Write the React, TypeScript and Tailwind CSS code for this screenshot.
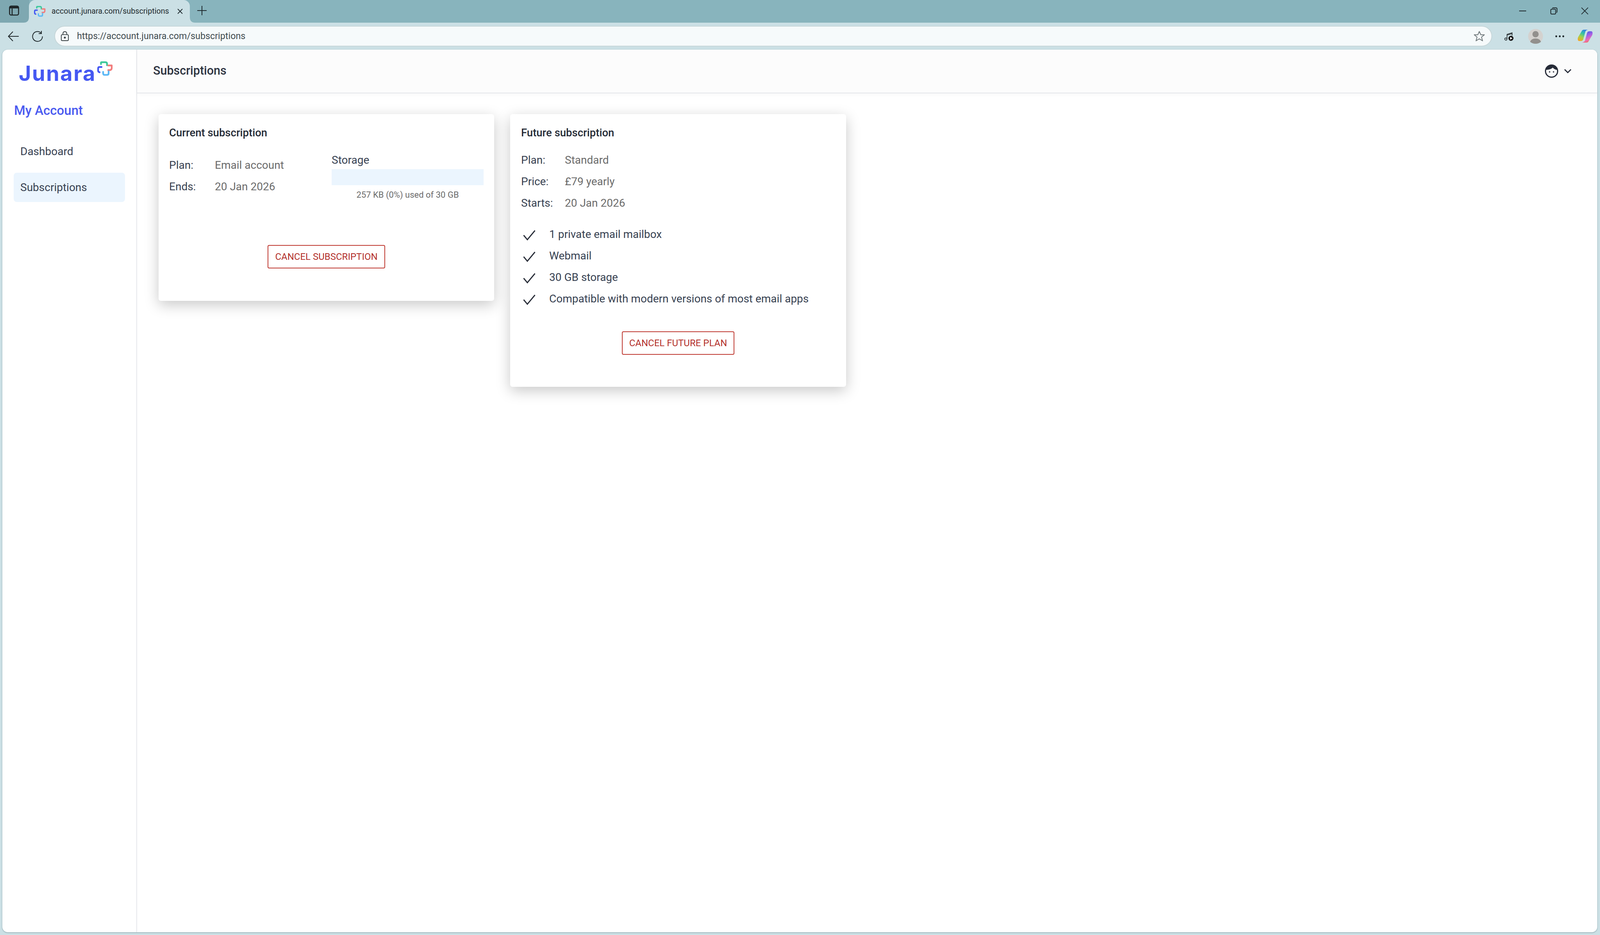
import React from 'react';

const SUBSCRIPTION_FEATURES = [
  '1 private email mailbox',
  'Webmail',
  '30 GB storage',
  'Compatible with modern versions of most email apps',
];

const CrossMark = ({ className }: { className: string }) => (
  <svg viewBox="0 0 40 37" fill="none" strokeWidth="4.4" strokeLinecap="round" strokeLinejoin="round" className={className}>
    <path d="M9.5 7V3.5Q9.5 2.2 11 2.2H21Q25 2.2 25 6V10" stroke="#3cc79a" />
    <path d="M28 10.5H37V17Q37 22 32 22.5H28" stroke="#f27c7c" />
    <path d="M29 25.5V31Q29 34.6 25 34.6H18Q15.5 34.6 15 31V27" stroke="#5cb8f5" />
    <path d="M11 14.5H6Q2.2 14.5 2.2 18V24Q2.2 27 6 28" stroke="#4558f2" />
  </svg>
);

const CopilotIcon = () => (
  <svg viewBox="0 0 38 35" className="w-[38px] h-[35px]">
    <defs>
      <linearGradient id="copilotLeft" x1="0.7" y1="0" x2="0.2" y2="1">
        <stop offset="0" stopColor="#2f7fe8" />
        <stop offset="0.35" stopColor="#35c3a5" />
        <stop offset="0.65" stopColor="#a4d24a" />
        <stop offset="1" stopColor="#f5a623" />
      </linearGradient>
      <linearGradient id="copilotRight" x1="0.3" y1="0" x2="0.7" y2="1">
        <stop offset="0" stopColor="#3a5fe0" />
        <stop offset="0.4" stopColor="#a45fe8" />
        <stop offset="0.75" stopColor="#ee6fb0" />
        <stop offset="1" stopColor="#f0703a" />
      </linearGradient>
    </defs>
    <path d="M10 5Q11.5 1 16 1H26Q21 2 19.5 6L14 26Q12.5 30 8 30H4Q0 30 0 25Q0 23 1 20Z" fill="url(#copilotLeft)" />
    <path d="M28 30Q26.5 34 22 34H11Q16 33 18.5 29L24 9Q25.5 5 30 5H34Q38 5 38 10Q38 12 37 15Z" fill="url(#copilotRight)" />
  </svg>
);

const TabFlare = ({ side }: { side: 'left' | 'right' }) => (
  <svg viewBox="0 0 14 14" className={side === 'left' ? 'absolute bottom-0 -left-[14px] w-[14px] h-[14px]' : 'absolute bottom-0 -right-[14px] w-[14px] h-[14px]'}>
    <path d={side === 'left' ? 'M14 0V14H0Q14 14 14 0Z' : 'M0 0V14H14Q0 14 0 0Z'} fill="#cbe0e5" />
  </svg>
);

const Field = ({ label, value, labelWidth }: { label: string; value: string; labelWidth: string }) => (
  <div className="flex items-center h-[55px]">
    <span className={`${labelWidth} text-[#374151]`}>{label}</span>
    <span className="text-[#6b6b6b]">{value}</span>
  </div>
);

const CancelButton = ({ children }: { children: React.ReactNode }) => (
  <div className="flex justify-center">
    <button className="h-[60px] px-[17px] bg-white border-2 border-[#bf3a32] rounded-[4px] text-[24px] text-[#b3302a] uppercase">
      {children}
    </button>
  </div>
);

export default function App() {
  return (
    <div className="w-screen h-screen flex flex-col bg-[#cbe0e5] overflow-hidden font-['Roboto',sans-serif] text-[28px]">
      {/* Browser tab strip */}
      <div className="h-[58px] shrink-0 bg-[#88b4bd] flex items-stretch text-[#1f2a2e]">
        <div className="w-[75px] bg-[#7ea8b1] rounded-br-[14px] flex items-center justify-center pb-1 -mr-px">
          <svg viewBox="0 0 26 26" fill="none" stroke="#1d2426" strokeWidth="2.6" className="w-[26px] h-[26px] ml-[-4px]">
            <rect x="1.5" y="1.5" width="23" height="23" rx="4" />
            <path d="M8 7.5V24.5" />
            <path d="M1.5 5H24.5" strokeWidth="5" />
          </svg>
        </div>
        <div className="relative w-[412px] bg-[#cbe0e5] rounded-t-[16px] flex items-center pl-[13px]">
          <TabFlare side="left" />
          <TabFlare side="right" />
          <CrossMark className="w-[30px] h-[30px]" />
          <span className="ml-[15px] text-[19.7px] whitespace-nowrap">account.junara.com/subscriptions</span>
          <svg viewBox="0 0 16 16" stroke="#1f2a2e" strokeWidth="1.8" className="absolute left-[379px] top-[21px] w-[16px] h-[16px]">
            <path d="M2 2L14 14M14 2L2 14" />
          </svg>
        </div>
        <div className="w-[62px] flex items-center justify-center">
          <svg viewBox="0 0 24 24" stroke="#1f2a2e" strokeWidth="2" className="w-[24px] h-[24px] mb-1">
            <path d="M12 0V24M0 12H24" />
          </svg>
        </div>
        <div className="flex-1" />
        <div className="flex items-center pr-[30px] pb-[2px]">
          <svg viewBox="0 0 18 18" stroke="#1f2a2e" strokeWidth="2" className="w-[18px] h-[18px]">
            <path d="M0 9H18" />
          </svg>
          <svg viewBox="0 0 18 18" fill="none" stroke="#1f2a2e" strokeWidth="2" className="w-[18px] h-[18px] ml-[62px]">
            <rect x="1" y="4.5" width="12.5" height="12.5" rx="2.5" />
            <path d="M5 2.5Q5.5 1 7.5 1H14Q17 1 17 4V10.5Q17 12.5 15.5 13" />
          </svg>
          <svg viewBox="0 0 18 18" stroke="#1f2a2e" strokeWidth="1.8" className="w-[18px] h-[18px] ml-[61px]">
            <path d="M0.5 0.5L17.5 17.5M17.5 0.5L0.5 17.5" />
          </svg>
        </div>
      </div>

      {/* Browser toolbar */}
      <div className="h-[69px] shrink-0 flex items-center pr-[19px]">
        <svg viewBox="0 0 28 26" fill="none" stroke="#20292c" strokeWidth="2" className="w-[28px] h-[26px] ml-[20px]">
          <path d="M13 1L1.5 13L13 25M1.5 13H28" />
        </svg>
        <svg viewBox="0 0 28 28" fill="none" stroke="#20292c" strokeWidth="2" className="w-[28px] h-[28px] ml-[34px]">
          <path d="M23 5.5A12.6 12.6 0 1 0 26.6 14" />
          <path d="M24 0V7H17" />
        </svg>
        <div className="flex-1 h-[53px] ml-[29px] bg-[#f6fafb] border-2 border-[#c6d6d9] rounded-full flex items-center">
          <svg viewBox="0 0 22 26" fill="none" stroke="#3a4245" strokeWidth="2" className="w-[22px] h-[25px] ml-[14px]">
            <rect x="1.5" y="9" width="19" height="16" rx="3" />
            <path d="M6 9V6Q6 1 11 1Q16 1 16 6V9" />
            <circle cx="11" cy="17" r="1.6" fill="#3a4245" />
          </svg>
          <span className="ml-[20px] text-[23.3px] text-[#3f4a4e]">https://account.junara.com/subscriptions</span>
          <svg viewBox="0 0 28 27" fill="none" stroke="#6f787b" strokeWidth="2" className="w-[28px] h-[27px] ml-auto mr-[17px]">
            <path d="M14 1.5L17.8 10H27L19.7 16L22.4 25.5L14 20.3L5.6 25.5L8.3 16L1 10H10.2Z" strokeLinejoin="round" />
          </svg>
        </div>
        <svg viewBox="0 0 24 24" fill="none" stroke="#262d30" strokeWidth="1.7" className="w-[24px] h-[24px] ml-[31px]">
          <circle cx="4" cy="19" r="2.8" />
          <path d="M7 19V7L20 3V10M7 9L20 5" />
          <circle cx="17" cy="17" r="6.5" fill="#111" stroke="none" />
          <path d="M15 13.5L21 17L15 20.5Z" fill="#fff" stroke="none" />
        </svg>
        <svg viewBox="0 0 38 38" className="w-[38px] h-[38px] ml-[37px]">
          <circle cx="19" cy="19" r="19" fill="#d4d2cf" />
          <circle cx="19" cy="13.5" r="8" fill="#92908d" />
          <path d="M5 33Q8 24.5 19 24.5Q30 24.5 33 33Q27 38 19 38Q11 38 5 33Z" fill="#92908d" />
        </svg>
        <svg viewBox="0 0 24 6" className="w-[24px] h-[6px] ml-[31px]" fill="#20292c">
          <circle cx="3" cy="3" r="2.4" />
          <circle cx="12" cy="3" r="2.4" />
          <circle cx="21" cy="3" r="2.4" />
        </svg>
        <div className="ml-[34px]">
          <CopilotIcon />
        </div>
      </div>

      {/* Page */}
      <div className="flex-1 min-h-0 ml-[6px] mr-[7px] mb-[7px] bg-white rounded-[14px] overflow-hidden flex shadow-[0_1px_3px_rgba(60,90,100,0.5)]">
        <aside className="w-[345px] shrink-0 border-r-2 border-[#e5e7eb] pt-[34px]">
          <div className="flex items-start pl-[42px]">
            <span className="h-[54px] leading-[54px] text-[54px] font-bold tracking-[2.5px] text-[#4558f2] font-['Inter',sans-serif]">Junara</span>
            <CrossMark className="w-[40px] h-[37px] -mt-[4px] ml-[3px]" />
          </div>
          <h2 className="h-[44px] mt-[46px] ml-[30px] flex items-center text-[33px] font-medium text-[#4a5af0]">My Account</h2>
          <nav className="mt-[45px] mx-[29px]">
            <div className="h-[75px] mb-[17px] px-[17px] flex items-center text-[#374151]">Dashboard</div>
            <div className="h-[75px] px-[17px] flex items-center rounded-[8px] bg-[#ebf5fe] text-[#374151]">Subscriptions</div>
          </nav>
        </aside>

        <div className="flex-1 min-w-0 flex flex-col">
          <header className="h-[112px] shrink-0 bg-[#fcfcfc] border-b-2 border-[#e5e7eb] shadow-[0_3px_10px_rgba(0,0,0,0.03)] flex items-center justify-between pl-[41px] pr-[66px]">
            <h1 className="text-[30.5px] font-medium text-[#2d3340] pb-[2px]">Subscriptions</h1>
            <div className="flex items-center gap-[15px]">
              <svg viewBox="0 0 34 34" fill="none" className="w-[34px] h-[34px]">
                <circle cx="17" cy="17" r="15.5" stroke="#262b38" strokeWidth="3" />
                <path d="M3 14Q4 2 17 2Q30 2 31 14Q24 13 20 8Q16 13 3 14Z" fill="#262b38" />
                <circle cx="12" cy="19" r="1.8" fill="#262b38" />
                <circle cx="22" cy="19" r="1.8" fill="#262b38" />
              </svg>
              <svg viewBox="0 0 20 12" fill="none" stroke="#262b38" strokeWidth="3" className="w-[19px] h-[12px]">
                <path d="M1.5 1.5L10 10L18.5 1.5" />
              </svg>
            </div>
          </header>

          <main className="flex-1 flex items-start gap-[41px] pt-[53px] pl-[55px]">
            {/* Current subscription */}
            <section className="w-[859px] pt-[28px] px-[27px] pb-[83px] bg-white rounded-[6px] shadow-[0_10px_36px_rgba(0,0,0,0.22)]">
              <h3 className="h-[40px] flex items-center text-[27.5px] font-medium text-[#252b36]">Current subscription</h3>
              <div className="flex items-start">
                <div className="w-[416px] mt-[35px]">
                  <Field label="Plan:" value="Email account" labelWidth="w-[117px]" />
                  <Field label="Ends:" value="20 Jan 2026" labelWidth="w-[117px]" />
                </div>
                <div className="w-[389px] mt-[30px]">
                  <div className="h-[40px] flex items-center text-[#374151]">Storage</div>
                  <div className="h-[41px] mt-[3px] bg-[#ebf5fe]" />
                  <div className="h-[28px] mt-[10px] flex items-center justify-center text-[22px] text-[#6b6b6b]">257 KB (0%) used of 30 GB</div>
                </div>
              </div>
              <div className="mt-[115px]">
                <CancelButton>Cancel subscription</CancelButton>
              </div>
            </section>

            {/* Future subscription */}
            <section className="w-[860px] pt-[28px] px-[28px] pb-[82px] bg-white rounded-[6px] shadow-[0_10px_36px_rgba(0,0,0,0.22)]">
              <h3 className="h-[40px] flex items-center text-[27.5px] font-medium text-[#252b36]">Future subscription</h3>
              <div className="mt-[22px]">
                <Field label="Plan:" value="Standard" labelWidth="w-[112px]" />
                <Field label="Price:" value="£79 yearly" labelWidth="w-[112px]" />
                <Field label="Starts:" value="20 Jan 2026" labelWidth="w-[112px]" />
              </div>
              <ul className="mt-[25px]">
                {SUBSCRIPTION_FEATURES.map((feature) => (
                  <li key={feature} className="h-[55px] flex items-center text-[#374151]">
                    <svg viewBox="0 0 32 28" fill="none" stroke="#2b303b" strokeWidth="3" className="w-[32px] h-[28px] ml-[5px] mr-[35px] mt-[4px]">
                      <path d="M1.5 14L11 25.5L30.5 2" />
                    </svg>
                    {feature}
                  </li>
                ))}
              </ul>
              <div className="mt-[56px]">
                <CancelButton>Cancel future plan</CancelButton>
              </div>
            </section>
          </main>
        </div>
      </div>
    </div>
  );
}
